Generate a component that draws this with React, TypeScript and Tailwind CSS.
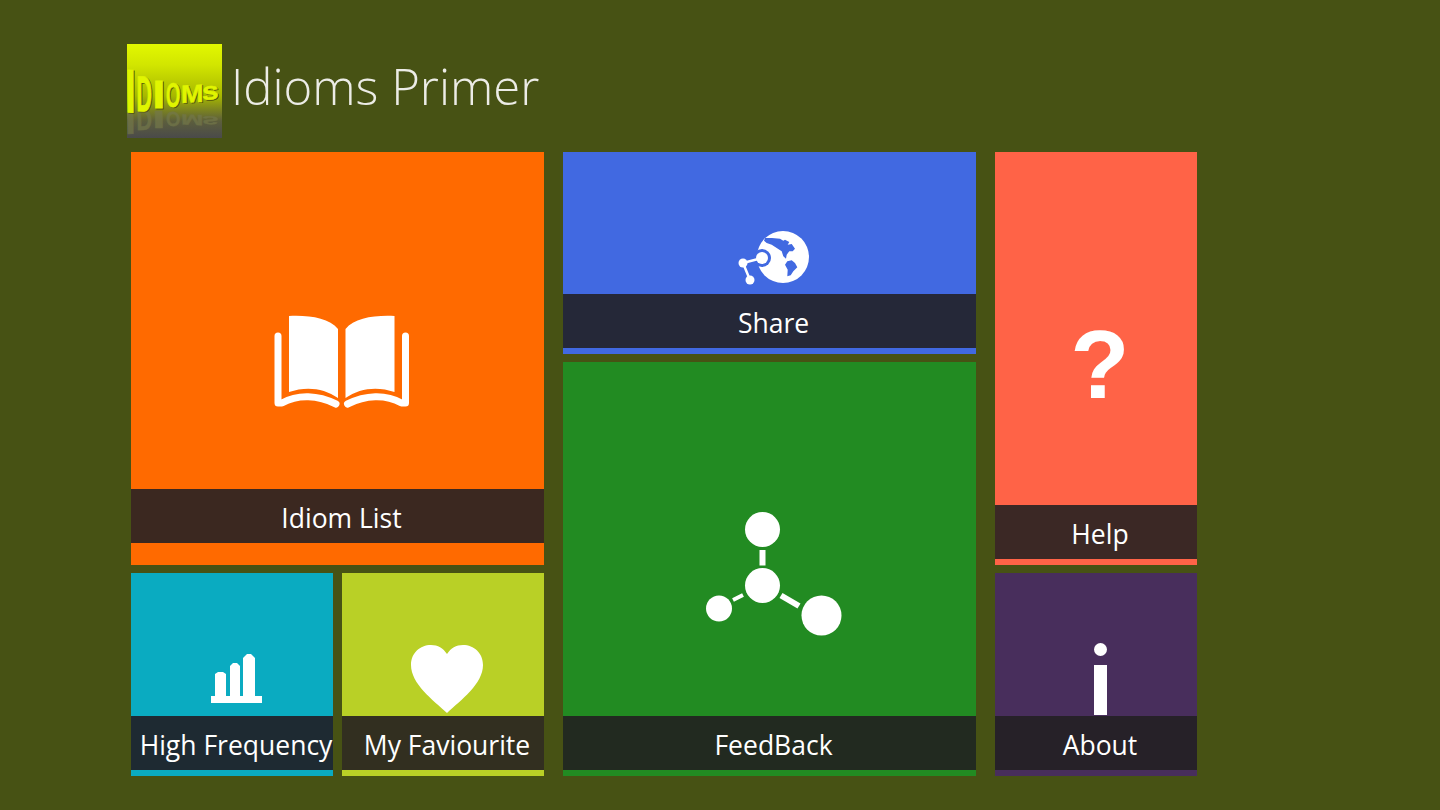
import type { ReactNode } from "react";

const font = { fontFamily: '"Open Sans", "Noto Sans", sans-serif' };

function Tile({
  label,
  bg,
  bar,
  area,
  children,
}: {
  label: string;
  bg: string;
  bar: string;
  area: string;
  children: ReactNode;
}) {
  return (
    <div className={`flex flex-col overflow-hidden ${bg}`}>
      <div className={`flex items-center justify-center pl-2 ${area}`}>{children}</div>
      <div className={`flex h-[54px] shrink-0 items-center justify-center whitespace-nowrap pl-2 pt-[6px] text-[26.5px] text-white ${bar}`}>
        {label}
      </div>
    </div>
  );
}

function LogoLetters({ fill }: { fill: string }) {
  return (
    <g fill={fill} stroke={fill} strokeWidth="0.2" fontFamily='"Liberation Sans", sans-serif' fontWeight="700" fontSize="10">
      <text transform="translate(-1.5 68) skewY(2) scale(3.6 6.1)">I</text>
      <text transform="translate(9.5 67) skewY(2) scale(2.15 5)">D</text>
      <text transform="translate(25.4 64) scale(4.6 3.9)">I</text>
      <text transform="translate(39 63) skewY(-2) scale(1.85 3.4)">O</text>
      <text transform="translate(54 59) skewY(-3) scale(2.7 2.5)">M</text>
      <text transform="translate(75 56) skewY(-4) scale(3 2.5)">s</text>
    </g>
  );
}

function Logo() {
  return (
    <div className="h-[94px] w-[95px] shrink-0 bg-[linear-gradient(180deg,#e2f800_0%,#d2e600_22%,#a8b800_55%,#7c8420_70%,#5c5e3c_82%,#4a4a4a_100%)]">
      <svg viewBox="0 0 95 94" width="95" height="94">
        <g transform="translate(0 105.6) scale(1 -0.6)" opacity="0.7">
          <LogoLetters fill="#74784a" />
        </g>
        <g transform="translate(1 0.8)">
          <LogoLetters fill="#50540a" />
        </g>
        <LogoLetters fill="#e0f500" />
      </svg>
    </div>
  );
}

function BookIcon() {
  return (
    <svg width="136" height="96" viewBox="0 0 136 96" fill="none">
      <path d="M15 1C35 0 55 3 64 14V83C50 73 32 71 15 77Z" fill="#fff" />
      <path d="M120.5 1C100.5 0 80.5 3 71.5 14V83C85.5 73 103.5 71 120.5 77Z" fill="#fff" />
      <path d="M4 21V88H8C24 79 44 80 62 89" stroke="#fff" strokeWidth="7" strokeLinecap="round" strokeLinejoin="round" />
      <path d="M131.5 21V88H127.5C111.5 79 91.5 80 73.5 89" stroke="#fff" strokeWidth="7" strokeLinecap="round" strokeLinejoin="round" />
    </svg>
  );
}

function GlobeIcon() {
  return (
    <svg width="74" height="56" viewBox="0 0 74 56">
      <circle cx="46" cy="28" r="26" fill="#fff" />
      <path
        d="M28 9L35 9L43 9.7L46.3 11.7L48 10.7L52.3 13L50.7 15.7L54.7 15L58 19.7L55.7 22.3L52.3 22.3L49.7 25.7L49 29.7L46.3 27.3L44.7 22.3L39.7 19L34.7 15.7L29.7 14L27 11.7Z"
        fill="#4169e1"
      />
      <path d="M50.3 32.3L54.7 31.3L58 34L60.3 38.3L56.3 42.3L53.7 46.3L50.3 47.3L50.7 40.7L48 35.7Z" fill="#4169e1" />
      <circle cx="25" cy="29" r="9" fill="#4169e1" />
      <circle cx="25" cy="29" r="6" fill="#fff" />
      <path d="M6 34L25 29M6 34L13 51" stroke="#fff" strokeWidth="2.5" />
      <circle cx="6" cy="34" r="4.5" fill="#fff" />
      <circle cx="13" cy="51" r="4.5" fill="#fff" />
    </svg>
  );
}

function MoleculeIcon() {
  return (
    <svg width="136" height="124" viewBox="0 0 136 124" fill="#fff">
      <circle cx="56.5" cy="17.5" r="17.5" />
      <circle cx="56.5" cy="73.5" r="17.5" />
      <circle cx="13" cy="96.5" r="13" />
      <circle cx="115.5" cy="103.5" r="20" />
      <rect x="53.5" y="38" width="6" height="15.5" />
      <path d="M27 88L37 83" stroke="#fff" strokeWidth="4" fill="none" />
      <path d="M75 83.5L93 94" stroke="#fff" strokeWidth="6" fill="none" />
    </svg>
  );
}

function BarsIcon() {
  return (
    <svg width="52" height="50" viewBox="0 0 52 50" fill="#fff">
      <path d="M1 42H52V49H1Z" />
      <path d="M5 43V20L8 18H13L16 20V43Z" />
      <path d="M20 43V12L23 9H27L30 12V43Z" />
      <path d="M33 43V4L37 0H41L45 4V43Z" />
    </svg>
  );
}

function HeartIcon() {
  return (
    <svg width="72" height="68" viewBox="0 0 72 68" fill="#fff">
      <path d="M36 68C22 55 0 39 0 20C0 8 9 0 20 0C27 0 32 3 36 9C40 3 45 0 52 0C63 0 72 8 72 20C72 39 50 55 36 68Z" />
    </svg>
  );
}

function InfoIcon() {
  return (
    <svg width="13" height="72" viewBox="0 0 13 72" fill="#fff">
      <circle cx="6.5" cy="6.5" r="6.5" />
      <rect x="0" y="22" width="13" height="50" />
    </svg>
  );
}

export default function App() {
  return (
    <div className="h-[810px] overflow-hidden bg-[#475214] pl-[127px] pt-[44px]" style={font}>
      <div className="flex items-center gap-[9px]">
        <Logo />
        <h1 className="mb-[10px] text-[49px] font-light leading-none text-[#ecece6]">Idioms Primer</h1>
      </div>
      <div className="ml-1 mt-[14px] grid w-fit grid-cols-[413px_413px_202px] gap-x-[19px]">
        <div className="flex flex-col gap-2">
          <Tile label="Idiom List" bg="bg-[#ff6a00] pb-[22px]" bar="bg-[#3b2820]" area="h-[337px] pt-[85px]">
            <BookIcon />
          </Tile>
          <div className="grid grid-cols-[202px_202px] gap-[9px]">
            <Tile label="High Frequency" bg="bg-[#0aabc1] pb-[6px]" bar="bg-[#1e2a32]" area="h-[143px] pt-[68px]">
              <BarsIcon />
            </Tile>
            <Tile label="My Faviourite" bg="bg-[#b9d026] pb-[6px]" bar="bg-[#322f20]" area="h-[143px] pt-[68px]">
              <HeartIcon />
            </Tile>
          </div>
        </div>
        <div className="flex flex-col gap-2">
          <Tile label="Share" bg="bg-[#4169e1] pb-[6px]" bar="bg-[#252838]" area="h-[142px] pt-[67px]">
            <GlobeIcon />
          </Tile>
          <Tile label="FeedBack" bg="bg-[#228b22] pb-[6px]" bar="bg-[#222a20]" area="h-[354px] pt-[69px]">
            <MoleculeIcon />
          </Tile>
        </div>
        <div className="flex flex-col gap-2">
          <Tile label="Help" bg="bg-[#ff6347] pb-[6px]" bar="bg-[#3b2825]" area="h-[353px] pt-[71px]">
            <span className="text-[97px] font-bold leading-none text-white" style={{ fontFamily: '"Liberation Sans", sans-serif' }}>
              ?
            </span>
          </Tile>
          <Tile label="About" bg="bg-[#482e5c] pb-[6px]" bar="bg-[#262128]" area="h-[143px] pt-[69px]">
            <InfoIcon />
          </Tile>
        </div>
      </div>
    </div>
  );
}
